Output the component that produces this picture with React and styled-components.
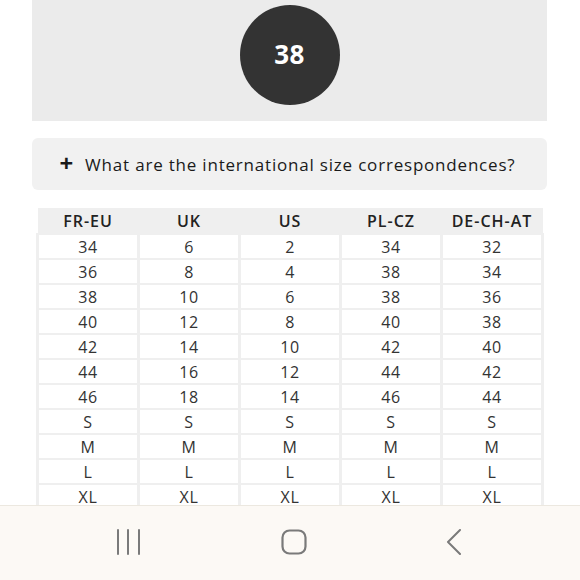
import React from 'react'
import styled, { createGlobalStyle } from 'styled-components'

const GlobalStyle = createGlobalStyle`
  html, body {
    margin: 0;
    padding: 0;
    background: #ffffff;
  }
  body {
    font-family: 'Open Sans', 'Noto Sans', sans-serif;
    color: #222;
  }
`

const headers = ['FR-EU', 'UK', 'US', 'PL-CZ', 'DE-CH-AT']
const rows = [
  ['34', '6', '2', '34', '32'],
  ['36', '8', '4', '38', '34'],
  ['38', '10', '6', '38', '36'],
  ['40', '12', '8', '40', '38'],
  ['42', '14', '10', '42', '40'],
  ['44', '16', '12', '44', '42'],
  ['46', '18', '14', '46', '44'],
  ['S', 'S', 'S', 'S', 'S'],
  ['M', 'M', 'M', 'M', 'M'],
  ['L', 'L', 'L', 'L', 'L'],
  ['XL', 'XL', 'XL', 'XL', 'XL'],
]

const App = () => {
  return (
    <Screen>
      <GlobalStyle />
      <Content>
        <SizePanel>
          <SizeBubble>38</SizeBubble>
        </SizePanel>
        <Accordion>
          <Plus>+</Plus>
          <span>What are the international size correspondences?</span>
        </Accordion>
        <SizeTable>
          <thead>
            <tr>
              {headers.map((h) => <HeadCell key={h}>{h}</HeadCell>)}
            </tr>
          </thead>
          <tbody>
            {rows.map((r, i) => (
              <tr key={i}>
                {r.map((c, j) => <Cell key={j}>{c}</Cell>)}
              </tr>
            ))}
          </tbody>
        </SizeTable>
      </Content>
      <NavBar>
        <NavButton>
          <svg width="26" height="26" viewBox="0 0 26 26">
            <g stroke="#7a7a7a" strokeWidth="2" strokeLinecap="round">
              <line x1="3" y1="1" x2="3" y2="25" />
              <line x1="13" y1="1" x2="13" y2="25" />
              <line x1="24" y1="1" x2="24" y2="25" />
            </g>
          </svg>
        </NavButton>
        <NavButton>
          <svg width="26" height="26" viewBox="0 0 26 26">
            <rect x="1.5" y="1.5" width="23" height="23" rx="7" fill="none" stroke="#7a7a7a" strokeWidth="2.2" />
          </svg>
        </NavButton>
        <NavButton>
          <svg width="26" height="26" viewBox="0 0 26 26">
            <polyline points="19,1 7,13 19,25" fill="none" stroke="#7a7a7a" strokeWidth="2" strokeLinecap="round" strokeLinejoin="round" />
          </svg>
        </NavButton>
      </NavBar>
    </Screen>
  )
}

const Screen = styled.div`
  width: 580px;
  height: 580px;
  overflow: hidden;
  display: flex;
  flex-direction: column;
  background: #fff;
`

const Content = styled.div`
  flex: 1;
  overflow: hidden;
  padding: 0 33px 0 32px;
  display: flex;
  flex-direction: column;
`

const SizePanel = styled.div`
  height: 121px;
  flex-shrink: 0;
  background: #ebebeb;
  display: flex;
  justify-content: center;
  padding-top: 5px;
  box-sizing: border-box;
`

const SizeBubble = styled.div`
  width: 100px;
  height: 100px;
  border-radius: 50%;
  background: #333333;
  color: #fff;
  display: flex;
  align-items: center;
  justify-content: center;
  font-size: 26px;
  font-weight: 700;
  letter-spacing: 0.5px;
  padding-bottom: 2px;
  box-sizing: border-box;
`

const Accordion = styled.div`
  margin-top: 17px;
  height: 52px;
  flex-shrink: 0;
  background: #f1f1f1;
  border-radius: 6px;
  display: flex;
  align-items: center;
  justify-content: center;
  gap: 11px;
  font-size: 17px;
  letter-spacing: 0.8px;
  color: #1a1a1a;
  padding-right: 4px;
`

const Plus = styled.span`
  font-weight: 700;
  font-size: 24px;
  margin-top: -4px;
`

const SizeTable = styled.table`
  margin: 18px 3px 0 4px;
  border-collapse: collapse;
  table-layout: fixed;
  width: calc(100% - 7px);
  flex-shrink: 0;
`

const HeadCell = styled.th`
  height: 25px;
  padding: 0;
  background: #efefef;
  font-size: 16px;
  font-weight: 600;
  letter-spacing: 1px;
  color: #222;
  text-align: center;
  border: 0;
`

const Cell = styled.td`
  height: 23px;
  padding: 0;
  text-align: center;
  font-size: 16px;
  letter-spacing: 0.6px;
  color: #333;
  background: #fff;
  border: 3px solid #efefef;
  border-top-width: 2px;
  border-bottom-width: 2px;
  line-height: 20px;
`

const NavBar = styled.div`
  height: 75px;
  flex-shrink: 0;
  background: #fcf9f5;
  border-top: 1px solid #ece8e0;
  display: grid;
  grid-template-columns: 117px 1fr 1fr 1fr 117px;
  align-items: center;
  padding-bottom: 2px;
  box-sizing: border-box;
  & > *:nth-child(1) { grid-column: 2; justify-self: start; margin-left: -2px; }
  & > *:nth-child(2) { grid-column: 3; justify-self: center; margin-left: 8px; }
  & > *:nth-child(3) { grid-column: 4; justify-self: end; margin-right: -4px; }
`

const NavButton = styled.div`
  width: 26px;
  height: 26px;
  display: flex;
`

export default App
